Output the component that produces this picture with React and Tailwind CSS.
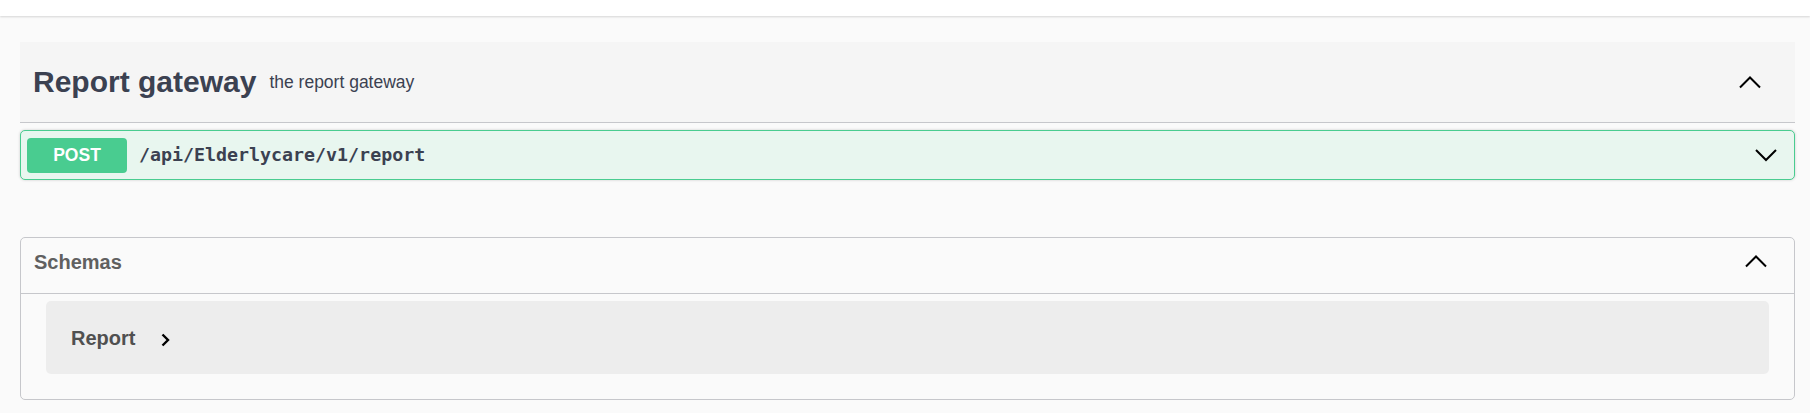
import React from "react";

const Chevron = ({ dir = "up", className = "" }) => {
  const points = dir === "up" ? "1,11.5 11,1.5 21,11.5" : "1,1 11,11 21,1";
  return (
    <svg width="22" height="13" viewBox="0 0 22 13" className={className}>
      <polyline points={points} fill="none" stroke="#000" strokeWidth="2" />
    </svg>
  );
};

const App = () => {
  return (
    <div className="min-h-screen bg-[#fafafa] font-['Liberation_Sans',Arial,sans-serif] text-[#3b4151]">
      <div className="h-[16px] bg-white shadow-[0_1px_2px_0_rgba(0,0,0,0.15)]" />

      <div className="ml-[20px] mr-[15px] pt-[26px]">
        {/* tag section */}
        <div className="flex h-[81px] items-center border-b border-[#c6c7cb] bg-[#f5f5f5] pl-[13px] pr-[34px]">
          <h3 className="text-[30px] font-bold leading-none text-[#3b4151]">Report gateway</h3>
          <small className="flex-1 px-[13px] text-[17.5px] text-[#3b4151]">the report gateway</small>
          <Chevron dir="up" />
        </div>

        <div className="mt-[7px] flex h-[50px] items-center rounded-[5px] border border-[#49cc90] bg-[#e8f6ef] pl-[6px] pr-[17px] shadow-[0_0_3px_rgba(0,0,0,0.19)]">
          <span className="flex h-[35px] w-[100px] items-center justify-center rounded-[4px] bg-[#49cc90] text-[17.5px] font-bold text-white">
            POST
          </span>
          <span className="flex-1 px-[12px] font-['DejaVu_Sans_Mono',monospace] text-[18.3px] font-bold text-[#3b4151]">
            /api/Elderlycare/v1/report
          </span>
          <Chevron dir="down" />
        </div>

        {/* schemas */}
        <div className="mt-[57px] rounded-[5px] border border-[#c6c7cb] pb-[25px]">
          <div className="flex h-[56px] items-center border-b border-[#c6c7cb] pb-[8px] pl-[13px] pr-[27px]">
            <h4 className="flex-1 text-[20px] font-bold text-[#606060]">Schemas</h4>
            <Chevron dir="up" />
          </div>
          <div className="mx-[25px] mt-[7px] flex h-[73px] items-center rounded-[5px] bg-[#ededed] pl-[25px]">
            <span className="text-[20px] font-bold text-[#505050]">Report</span>
            <svg width="9" height="14" viewBox="0 0 9 14" className="ml-[26px] mt-[5px]">
              <polyline points="1.5,1.5 7,7 1.5,12.5" fill="none" stroke="#000" strokeWidth="2.4" />
            </svg>
          </div>
        </div>
      </div>
    </div>
  );
};

export default App;
